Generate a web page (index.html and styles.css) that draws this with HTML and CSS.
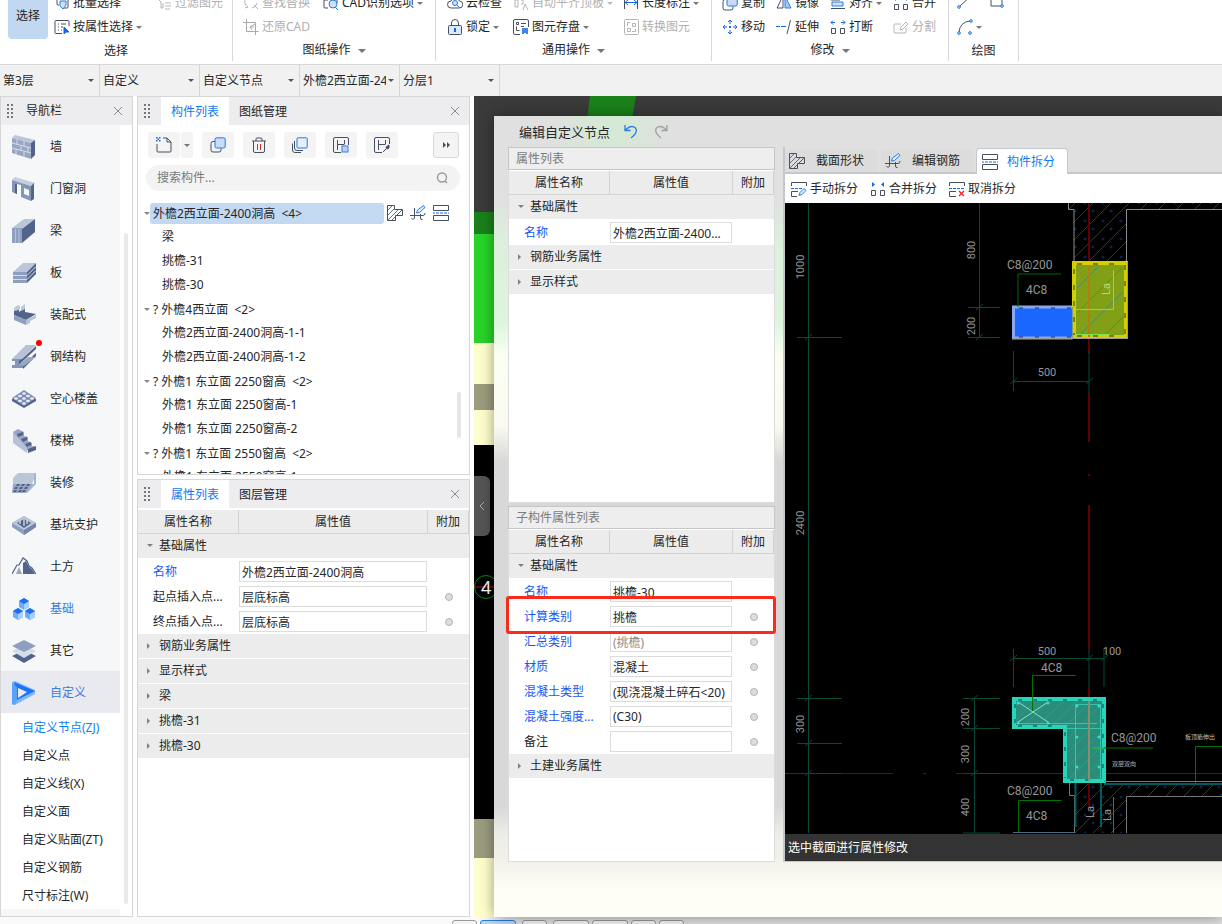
FILE: index.html
```html
<!DOCTYPE html>
<html lang="zh-CN">
<head>
<meta charset="utf-8">
<title>编辑自定义节点</title>
<link rel="stylesheet" href="styles.css">
</head>
<body>
<svg class="sprite" aria-hidden="true">
  <symbol id="i-batch" viewBox="0 0 16 16"><path d="M3 1v8q0 1 1 1h1M8 13h5q1 0 1-1V4" stroke="#474f63"/><path d="M6 6h6v4l-3 4-3-3z" fill="#cfe0f7" stroke="#2a7de1"/></symbol>
  <symbol id="i-prop" viewBox="0 0 16 16"><path d="M15 7V2.500q0-1-1-1H2q-1 0-1 1v11q0 1 1 1h6M4 5h1m2 0h5M4 8h1m2 0h2M4 11h1m2 0h1" stroke="#474f63"/><path d="M10 8v7l2-2h3z" fill="#1467e8" stroke="#1467e8"/></symbol>
  <symbol id="i-filter" viewBox="0 0 16 16"><path d="M1 3l4 4v6h2V8M9 8h6M9 11h6M9 14h5" stroke="#b5b5b5"/></symbol>
  <symbol id="i-find" viewBox="0 0 16 16"><path d="M4 2a6 6 0 0 0 1 10l-3 1M9 13a6 6 0 0 0 5-5M11 10l4 4" stroke="#b5b5b5"/></symbol>
  <symbol id="i-crop" viewBox="0 0 16 16"><path d="M3.500 0v12.500h12M0 3.500h12.500V16M12 5L7 8l2 3M7 8h4" stroke="#a9a9a9"/></symbol>
  <symbol id="i-cad" viewBox="0 0 16 16"><path d="M5 13H2q-1 0-1-1V2h11q2 0 2 2v4M1 5h4" stroke="#474f63"/><circle cx="10" cy="9" r="4" fill="#cfe0f7" stroke="#2a7de1"/><path d="M12 12l3 3" stroke="#2a7de1"/></symbol>
  <symbol id="i-cloud" viewBox="0 0 16 16"><path d="M4 13a3.500 3.500 0 0 1 0-7 4.500 4.500 0 0 1 8.500 0A3.500 3.500 0 0 1 12 13z" stroke="#474f63"/><circle cx="8" cy="8" r="2.500" stroke="#2a7de1" fill="#cfe0f7"/><path d="M10 10l3 3" stroke="#2a7de1"/></symbol>
  <symbol id="i-lock" viewBox="0 0 16 16"><path d="M4.500 6V4a3.500 3.500 0 0 1 7 0v2" stroke="#474f63"/><rect x="1.500" y="6.500" width="13" height="9" rx="1" fill="#dbe9fb" stroke="#474f63"/><path d="M8 9v4" stroke="#1467e8" stroke-width="2"/></symbol>
  <symbol id="i-flush" viewBox="0 0 16 16"><path d="M1 2h14M2 5h3v7H2zM8 5h2v4H8M10 15l2-6 3 6" stroke="#b5b5b5"/></symbol>
  <symbol id="i-save" viewBox="0 0 16 16"><path d="M15.500 8V2q0-1.500-1.500-1.500H2Q.5.5.5 2v12q0 1.500 1.500 1.500h5M8 4.500h5M8 7.500h3M3.500 3.500h2v2h-2zM3.500 7.500v4h3" stroke="#474f63"/><path d="M9 9h6v6H9z" fill="#3f84ea"/><path d="M11 14.500h2" stroke="#fff"/></symbol>
  <symbol id="i-length" viewBox="0 0 16 16"><path d="M1.500 1v13M14.500 1v13" stroke="#474f63"/><path d="M2 7.500h12M5 5L2 7.500 5 10M11 5l3 2.500-3 2.500" stroke="#1467e8"/></symbol>
  <symbol id="i-convert" viewBox="0 0 16 16"><rect x="1.500" y=".5" width="14" height="15" rx="1" stroke="#b5b5b5"/><path d="M4.500 7V3.500H7M9.500 4.500h3v3h-3zM4.500 9.500h3v3h-3zM9 12.500h3.500V10" stroke="#b5b5b5"/></symbol>
  <symbol id="i-copy" viewBox="0 0 16 16"><path d="M5 4.500H3q-2 0-2 2V13q0 2 2 2h6q2 0 2-2v-1.500" stroke="#474f63"/><rect x="5" y=".8" width="10.200" height="10.200" rx="1.500" fill="#cadcf5" stroke="#1f78e5"/></symbol>
  <symbol id="i-move" viewBox="0 0 16 16"><path d="M8 1v4M8 11v4M1 8h4M11 8h4M6 3l2-2 2 2M6 13l2 2 2-2M3 6L1 8l2 2M13 6l2 2-2 2" stroke="#1467e8"/><rect x="7" y="7" width="2" height="2" fill="#1467e8"/></symbol>
  <symbol id="i-mirror" viewBox="0 0 16 16"><path d="M7 1v12H1z" stroke="#474f63"/><path d="M9 1v12h6z" fill="#a6c6f3" stroke="#2a7de1"/></symbol>
  <symbol id="i-extend" viewBox="0 0 16 16"><path d="M14.500 1l-3.500 14" stroke="#474f63"/><path d="M0 7.500h4m1 0h5" stroke="#1467e8"/></symbol>
  <symbol id="i-align" viewBox="0 0 16 16"><path d="M1 1h9v4H1zM1 13.500h14" stroke="#474f63"/><path d="M2 7h11v4H2z" stroke="#2a7de1" fill="#cfe0f7"/></symbol>
  <symbol id="i-break" viewBox="0 0 16 16"><path d="M1.500 9.500h4v5h-4zM10.500 9.500h4v5h-4z" stroke="#474f63"/><path d="M1 3.500h4M3 1.500l-2 2 2 2M11 3.500h4M13 1.500l2 2-2 2" stroke="#1467e8"/></symbol>
  <symbol id="i-merge" viewBox="0 0 16 16"><path d="M1.500 9.500h4v5h-4zM10.500 9.500h4v5h-4z" stroke="#474f63"/><path d="M2 1l3 2.500L2 6zM14 1l-3 2.500L14 6z" fill="#1467e8"/></symbol>
  <symbol id="i-divide" viewBox="0 0 16 16"><path d="M8 5H2q-1 0-1 1v7q0 1 1 1h10q1 0 1-1V9M7 11l1-3 5-5 2 2-5 5z" stroke="#b5b5b5"/></symbol>
  <symbol id="i-line" viewBox="0 0 16 16"><path d="M3 11L15 0" stroke="#474f63"/><circle cx="2" cy="12" r="1.300" stroke="#1467e8"/></symbol>
  <symbol id="i-rect" viewBox="0 0 16 16"><path d="M2 0v11h11V0" stroke="#474f63"/><circle cx="13" cy="11" r="1.300" stroke="#1467e8" fill="#fff"/></symbol>
  <symbol id="i-arc" viewBox="0 0 16 16"><path d="M2 13Q3 3 13 2" stroke="#474f63"/><g stroke="#1467e8" fill="#fff"><circle cx="2" cy="14" r="1.300"/><circle cx="14" cy="2" r="1.300"/><circle cx="13" cy="14" r="1.300"/></g></symbol>
  <symbol id="i-new" viewBox="0 0 16 16"><path d="M7 1h4l4 4v9q0 1-1 1H2q-1 0-1-1V7M11 1v4h4" stroke="#474f63"/><path d="M0 0h1.500v1.500H0zM3 0h1.500v1.500H3zM1.500 1.500H3V3H1.500zM0 3h1.500v1.500H0zM3 3h1.500v1.500H3z" fill="#1467e8"/></symbol>
  <symbol id="i-trash" viewBox="0 0 16 16"><path d="M1 4h14M5 4V2q0-1 1-1h4q1 0 1 1v2M2.500 4v10q0 1.500 1.500 1.500h8q1.500 0 1.500-1.500V4" stroke="#474f63"/><path d="M6.500 7v6M9.500 7v6" stroke="#e02828"/></symbol>
  <symbol id="i-layers" viewBox="0 0 16 16"><path d="M.5 6.500V13q0 2.500 2.500 2.500h6M2.500 4v7q0 2.500 2.500 2.500h6" stroke="#474f63"/><rect x="5" y=".8" width="10.200" height="10.200" rx="1" fill="#e6f0fc" stroke="#1f78e5"/></symbol>
  <symbol id="i-store" viewBox="0 0 16 16"><path d="M15.500 8V2q0-1.500-1.500-1.500H2Q.5.5.5 2v12q0 1.500 1.500 1.500h6M4.500 3v10M4.500 7.500h7M11.500 3v4" stroke="#474f63"/><rect x="9" y="9" width="6" height="6" fill="#b9d2f4" stroke="#3f7fdc"/></symbol>
  <symbol id="i-pick" viewBox="0 0 16 16"><path d="M15.500 7V2q0-1.500-1.500-1.500H2Q.5.5.5 2v12q0 1.500 1.500 1.500h6M4.500 3v10M4.500 7.500h7M11.500 3v4M9 15l4-4" stroke="#474f63"/><path d="M12 10l3-2 0 3-2 1z" fill="#474f63" stroke="#474f63"/></symbol>
  <symbol id="i-search" viewBox="0 0 16 16"><circle cx="7" cy="7.500" r="4.500" stroke="#999" stroke-width="1.400"/><path d="M10 11l2 2" stroke="#999" stroke-width="1.400"/></symbol>
  <symbol id="i-section" viewBox="0 0 16 16"><path d="M.5.5h7v4h8v6h-7v5h-8z" stroke="#474f63"/><path d="M1 5l4-4M1 10l6-6M1 15L11 5M5 15l10-10M10 10l4-4" stroke="#474f63" stroke-width=".8"/></symbol>
  <symbol id="i-rebar" viewBox="0 0 16 16"><path d="M4.500 3v9q0 3.500-3 1.500M0 10.500h13q2 0 2-2.500M10.500 9v4q0 2 2 1.500" stroke="#474f63"/><path d="M6.500 8l1-3 6-4.500 1.500 2-5.500 5z" fill="#dceafb" stroke="#2a7de1"/></symbol>
  <symbol id="i-split" viewBox="0 0 16 16"><path d="M.5.5h15v5H.5zM.5 10.500h15v5H.5z" stroke="#474f63"/><path d="M0 8h2m1 0h3m1 0h3m1 0h3m1 0h1" stroke="#1467e8"/></symbol>
  <symbol id="i-msplit" viewBox="0 0 16 16"><path d="M.5 5V1.500h15V5M7 10.500H.5v5H6" stroke="#474f63"/><path d="M0 7.500h3m1 0h3m1 0h3" stroke="#1467e8"/><path d="M8 14.500l1-3 4-4 2 2-4 4z" fill="#dceafb" stroke="#2a7de1"/></symbol>
  <symbol id="i-csplit" viewBox="0 0 16 16"><path d="M.5 5V1.500h15V5M7 10.500H.5v5H7" stroke="#474f63"/><path d="M0 7.500h3m1 0h3m1 0h3m1 0h3" stroke="#1467e8"/><path d="M10 10l5 5M15 10l-5 5" stroke="#e02828" stroke-width="1.300"/></symbol>
  <symbol id="i-undo" viewBox="0 0 16 16"><path d="M2 1v5.500h5.500M2 6.500Q8 0 12.500 4q3 4-4.500 10" stroke="currentColor" stroke-width="1.300"/></symbol>
  <symbol id="i-redo" viewBox="0 0 16 16"><path d="M14 1v5.500H8.500M14 6.500Q8 0 3.500 4q-3 4 4.500 10" stroke="currentColor" stroke-width="1.300"/></symbol>
  <symbol id="i-close" viewBox="0 0 10 10"><path d="M1 1l8 8M9 1L1 9" stroke="#8c8c8c"/></symbol>
  <symbol id="i-grip" viewBox="0 0 8 16"><path d="M1 1h2v2H1zM5 1h2v2H5zM1 5h2v2H1zM5 5h2v2H5zM1 9h2v2H1zM5 9h2v2H5zM1 13h2v2H1zM5 13h2v2H5z" fill="#777"/></symbol>

  <symbol id="n-wall" viewBox="0 0 24 24"><path d="M0 3L3 0l20 5-4 3z" fill="#bcc6d9"/><path d="M0 3l19 5v16L0 18z" fill="#98a5c3"/><path d="M19 8l4-3v15l-4 4z" fill="#52648a"/><path d="M0 8l19 5M0 13l19 5M5 4.500v5M12 6v5M9 10.500v5M16 12v5M4 14v5M12 16.500v5" stroke="#d5dcea"/></symbol>
  <symbol id="n-door" viewBox="0 0 24 24"><path d="M0 3l3-3 20 6-4 3z" fill="#c6cede"/><path d="M0 3l19 6v15L9 20V8L5 7v10l-5-2zM12 11v6l5 2v-6z" fill="#8595b8" fill-rule="evenodd"/><path d="M19 9l3-3v16l-3 2zM3 7l2 0v10l-2-1z" fill="#52648a"/></symbol>
  <symbol id="n-beam" viewBox="0 0 24 24"><path d="M0 9L12 0h11L10 10z" fill="#bcc6d9"/><path d="M0 9h10v15H0z" fill="#8f9fc0"/><path d="M10 10L23 0v13L10 24z" fill="#52648a"/><path d="M3.500 10v14M7 10v14" stroke="#b6c1d8"/></symbol>
  <symbol id="n-slab" viewBox="0 0 24 24"><path d="M1 11l10-9h13l-9 9z" fill="#bcc6d9"/><path d="M1 11h14v11H1z" fill="#8f9fc0"/><path d="M15 11l9-9v11l-9 9z" fill="#52648a"/><path d="M1 14.500h14l9-9M1 18.500h14l9-9" stroke="#d5dcea"/></symbol>
  <symbol id="n-prefab" viewBox="0 0 24 24"><path d="M2 8l5-3v4l6-5v5l11 2-10 6L2 12z" fill="#52648a"/><path d="M2 12l12 5v5L2 17z" fill="#8f9fc0"/><path d="M14 17l10-5v3l-6 3v2l-4 2z" fill="#b6c1d8"/><path d="M2 5l4-3 2 1v3L4 8 2 7zM9 4l4-3v5L9 8z" fill="#bcc6d9"/></symbol>
  <symbol id="n-steel" viewBox="0 0 24 24"><path d="M0 14L14 0h10L10 14z" fill="#b6c1d8"/><path d="M0 14h10v2H7v4h4v3H0v-3h3v-4H0z" fill="#8595b8"/><path d="M10 14L24 1v3L12 15 7 20v-4z" fill="#52648a"/><path d="M11 20L24 8v3L11 24z" fill="#52648a"/><path d="M7 20l9-8h8l-12 9z" fill="#9aa8c5"/></symbol>
  <symbol id="n-hollow" viewBox="0 0 24 24"><path d="M12 4l12 8v2l-12 7L0 14v-2z" fill="#52648a"/><path d="M12 3l12 8-12 8L0 11z" fill="#7f90b4"/><g fill="#e6ebf4"><ellipse cx="12" cy="6.500" rx="2" ry="1.300"/><ellipse cx="8" cy="9" rx="2" ry="1.300"/><ellipse cx="4" cy="11.500" rx="2" ry="1.300"/><ellipse cx="16" cy="9" rx="2" ry="1.300"/><ellipse cx="12" cy="11.500" rx="2" ry="1.300"/><ellipse cx="8" cy="14" rx="2" ry="1.300"/><ellipse cx="20" cy="11.500" rx="2" ry="1.300"/><ellipse cx="16" cy="14" rx="2" ry="1.300"/><ellipse cx="12" cy="16.500" rx="2" ry="1.300"/></g></symbol>
  <symbol id="n-stair" viewBox="0 0 24 24"><path d="M1 3l5-3 6 3v4l4 1v4l4 2v3l4 1-8 4-4-5-4-4-4-4z" fill="#98a5c3"/><path d="M1 3l14 16v5L1 14z" fill="#b6c1d8"/><path d="M5 5l6-2v3l-5 2zM9 10l6-2v3l-4 2zM13 15l6-2v3l-4 2zM16 20l8-3v4l-8 3z" fill="#52648a"/></symbol>
  <symbol id="n-finish" viewBox="0 0 24 24"><path d="M1 7l5-5h18l-4 11H1z" fill="#bcc6d9"/><path d="M1 13h21l-8 9H0z" fill="#9aa8c5"/><path d="M22 13V3l2-1v11l-9 9h-2z" fill="#a8b4cc"/><path d="M5 13h3l-1 2H4zm5 0h3l-1 2H9zm5 0h3l-1 2h-3zM3 16h3l-1 2H2zm5 0h3l-1 2H7zm5 0h3l-1 2h-3zM2 19h3l-1 2H1zm5 0h3l-1 2H6zm4 0h3l-1 2h-3z" fill="#52648a"/></symbol>
  <symbol id="n-pit" viewBox="0 0 24 24"><path d="M12 3l12 7v4l-12 8L0 14v-4z" fill="#8f9fc0"/><path d="M12 3l12 7-12 7L0 10z" fill="#bcc6d9"/><path d="M12 6l7 4-7 5-7-5z" fill="#52648a"/><path d="M8 7v4M12 6v7M15 7v4" stroke="#c8d0e0" stroke-width="1.500"/><path d="M12 17l12-7v4l-12 8z" fill="#7384aa"/></symbol>
  <symbol id="n-earth" viewBox="0 0 24 24"><path d="M0 19l5-9 2 0 4-7 4 3 2 5 3 2 4 6" stroke="#52648a" stroke-width="1.200"/><path d="M11 19V8l3-2 3 6 3 2 3 5z" fill="#52648a"/><path d="M4 19l3-7 3 7z" fill="#98a5c3"/></symbol>
  <symbol id="n-base" viewBox="0 0 24 24"><path d="M12 1l5 3v6l-5 3-5-3V4zM6 11l5 3v6l-5 3-5-3v-6zM18 11l5 3v6l-5 3-5-3v-6z" fill="#6cabff"/><path d="M12 7l5-3v6l-5 3zM6 17l5-3v6l-5 3zM18 17l5-3v6l-5 3z" fill="#a9ceff"/><path d="M12 1l5 3-5 3-5-3zM6 11l5 3-5 3-5-3zM18 11l5 3-5 3-5-3z" fill="#1d6ff2"/></symbol>
  <symbol id="n-other" viewBox="0 0 24 24"><path d="M12 11l12 6-12 7-12-7z" fill="#52648a"/><path d="M12 6l12 6-12 7-12-7z" fill="#d5dcea"/><path d="M12 1l12 6-12 6L0 7z" fill="#8f9fc0"/></symbol>
  <symbol id="n-custom" viewBox="0 0 24 24"><path d="M0 1l3-1 20 9v4L3 24l-3-1z" fill="#7db8ff"/><path d="M2 1l21 9L5 19z" fill="#1d74f0"/><path d="M0 2l5 4v14l-3 4-2-1z" fill="#5aa2fa"/><path d="M6 7l9 4-9 6z" fill="#ebecf0"/></symbol>
</svg>

<header class="ribbon">
  <section class="group g-select">
    <div class="tools">
      <button class="big">选择</button>
      <div class="col">
        <button class="tool"><svg><use href="#i-batch"/></svg>批量选择</button>
        <button class="tool"><svg><use href="#i-prop"/></svg>按属性选择<i class="caret"></i></button>
      </div>
      <div class="col"><button class="tool" disabled><svg><use href="#i-filter"/></svg>过滤图元</button></div>
    </div>
    <h2>选择</h2>
  </section>
  <section class="group g-sheet">
    <div class="tools">
      <div class="col">
        <button class="tool" disabled><svg><use href="#i-find"/></svg>查找替换</button>
        <button class="tool" disabled><svg><use href="#i-crop"/></svg>还原CAD</button>
      </div>
      <div class="col"><button class="tool"><svg><use href="#i-cad"/></svg>CAD识别选项<i class="caret"></i></button></div>
    </div>
    <h2>图纸操作<i class="caret large"></i></h2>
  </section>
  <section class="group g-common">
    <div class="tools">
      <div class="col">
        <button class="tool"><svg><use href="#i-cloud"/></svg>云检查</button>
        <button class="tool"><svg><use href="#i-lock"/></svg>锁定<i class="caret"></i></button>
      </div>
      <div class="col">
        <button class="tool" disabled><svg><use href="#i-flush"/></svg>自动平齐顶板<i class="caret"></i></button>
        <button class="tool"><svg><use href="#i-save"/></svg>图元存盘<i class="caret"></i></button>
      </div>
      <div class="col">
        <button class="tool"><svg><use href="#i-length"/></svg>长度标注<i class="caret"></i></button>
        <button class="tool" disabled><svg><use href="#i-convert"/></svg>转换图元</button>
      </div>
    </div>
    <h2>通用操作<i class="caret large"></i></h2>
  </section>
  <section class="group g-modify">
    <div class="tools">
      <div class="col">
        <button class="tool"><svg><use href="#i-copy"/></svg>复制</button>
        <button class="tool"><svg><use href="#i-move"/></svg>移动</button>
      </div>
      <div class="col">
        <button class="tool"><svg><use href="#i-mirror"/></svg>镜像</button>
        <button class="tool"><svg><use href="#i-extend"/></svg>延伸</button>
      </div>
      <div class="col">
        <button class="tool"><svg><use href="#i-align"/></svg>对齐<i class="caret"></i></button>
        <button class="tool"><svg><use href="#i-break"/></svg>打断</button>
      </div>
      <div class="col">
        <button class="tool"><svg><use href="#i-merge"/></svg>合并</button>
        <button class="tool" disabled><svg><use href="#i-divide"/></svg>分割</button>
      </div>
    </div>
    <h2>修改<i class="caret large"></i></h2>
  </section>
  <section class="group g-draw">
    <div class="tools">
      <div class="col">
        <button class="tool" aria-label="直线"><svg><use href="#i-line"/></svg></button>
        <button class="tool" aria-label="弧线"><svg><use href="#i-arc"/></svg><i class="caret"></i></button>
      </div>
      <div class="col"><button class="tool" aria-label="矩形"><svg><use href="#i-rect"/></svg></button></div>
    </div>
    <h2>绘图</h2>
  </section>
</header>

<div class="filters">
  <label><select aria-label="楼层"><option>第3层</option></select></label>
  <label><select aria-label="类别"><option>自定义</option></select></label>
  <label><select aria-label="类型"><option>自定义节点</option></select></label>
  <label><select aria-label="构件"><option>外檐2西立面-2400洞高</option></select></label>
  <label><select aria-label="分层"><option>分层1</option></select></label>
</div>

<main class="workspace">
  <nav class="panel nav">
    <div class="panel-head"><svg class="grip"><use href="#i-grip"/></svg><h3>导航栏</h3><button class="close" aria-label="关闭"><svg><use href="#i-close"/></svg></button></div>
    <div class="nav-body">
      <div class="nav-list">
        <button class="nav-item"><svg><use href="#n-wall"/></svg>墙</button>
        <button class="nav-item"><svg><use href="#n-door"/></svg>门窗洞</button>
        <button class="nav-item"><svg><use href="#n-beam"/></svg>梁</button>
        <button class="nav-item"><svg><use href="#n-slab"/></svg>板</button>
        <button class="nav-item"><svg><use href="#n-prefab"/></svg>装配式</button>
        <button class="nav-item badge"><svg><use href="#n-steel"/></svg>钢结构</button>
        <button class="nav-item"><svg><use href="#n-hollow"/></svg>空心楼盖</button>
        <button class="nav-item"><svg><use href="#n-stair"/></svg>楼梯</button>
        <button class="nav-item"><svg><use href="#n-finish"/></svg>装修</button>
        <button class="nav-item"><svg><use href="#n-pit"/></svg>基坑支护</button>
        <button class="nav-item"><svg><use href="#n-earth"/></svg>土方</button>
        <button class="nav-item blue"><svg><use href="#n-base"/></svg>基础</button>
        <button class="nav-item"><svg><use href="#n-other"/></svg>其它</button>
        <button class="nav-item blue current"><svg><use href="#n-custom"/></svg>自定义</button>
        <div class="sub-list">
          <button class="active">自定义节点(ZJ)</button>
          <button>自定义点</button>
          <button>自定义线(X)</button>
          <button>自定义面</button>
          <button>自定义贴面(ZT)</button>
          <button>自定义钢筋</button>
          <button>尺寸标注(W)</button>
        </div>
      </div>
      <div class="nav-scroll"></div>
    </div>
  </nav>

  <div class="side">
    <section class="panel components">
      <div class="panel-head"><svg class="grip"><use href="#i-grip"/></svg><button class="tab on">构件列表</button><button class="tab">图纸管理</button><button class="close" aria-label="关闭"><svg><use href="#i-close"/></svg></button></div>
      <div class="actions">
        <div class="pair"><button aria-label="新建"><svg><use href="#i-new"/></svg></button><button class="drop" aria-label="更多新建"><i class="caret"></i></button></div>
        <button aria-label="复制"><svg><use href="#i-copy"/></svg></button>
        <button aria-label="删除"><svg><use href="#i-trash"/></svg></button>
        <button aria-label="层间复制"><svg><use href="#i-layers"/></svg></button>
        <button aria-label="存档"><svg><use href="#i-store"/></svg></button>
        <button aria-label="提取"><svg><use href="#i-pick"/></svg></button>
        <button class="more" aria-label="更多"><i></i><i></i></button>
      </div>
      <label class="search"><input type="text" placeholder="搜索构件..." aria-label="搜索构件"><svg><use href="#i-search"/></svg></label>
      <div class="tree-wrap">
        <ul class="tree">
          <li class="parent"><i class="caret"></i><span class="selected">外檐2西立面-2400洞高 &nbsp;&lt;4&gt;</span><svg><use href="#i-section"/></svg><svg><use href="#i-rebar"/></svg><svg><use href="#i-split"/></svg></li>
          <li>梁</li>
          <li>挑檐-31</li>
          <li>挑檐-30</li>
          <li class="parent"><i class="caret"></i><span>? 外檐4西立面 &nbsp;&lt;2&gt;</span></li>
          <li>外檐2西立面-2400洞高-1-1</li>
          <li>外檐2西立面-2400洞高-1-2</li>
          <li class="parent"><i class="caret"></i><span>? 外檐1 东立面 2250窗高 &nbsp;&lt;2&gt;</span></li>
          <li>外檐1 东立面 2250窗高-1</li>
          <li>外檐1 东立面 2250窗高-2</li>
          <li class="parent"><i class="caret"></i><span>? 外檐1 东立面 2550窗高 &nbsp;&lt;2&gt;</span></li>
          <li>外檐1 东立面 2550窗高-1</li>
        </ul>
        <div class="tree-scroll"></div>
      </div>
    </section>

    <section class="panel props">
      <div class="panel-head"><svg class="grip"><use href="#i-grip"/></svg><button class="tab on">属性列表</button><button class="tab">图层管理</button><button class="close" aria-label="关闭"><svg><use href="#i-close"/></svg></button></div>
      <table class="grid">
        <colgroup><col class="c-name"><col><col class="c-add"></colgroup>
        <thead><tr><th>属性名称</th><th>属性值</th><th>附加</th></tr></thead>
        <tbody>
          <tr class="section open"><td colspan="3">基础属性</td></tr>
          <tr><td class="key"><label for="p1">名称</label></td><td><input id="p1" type="text" value="外檐2西立面-2400洞高"></td><td></td></tr>
          <tr><td><label for="p2">起点插入点...</label></td><td><input id="p2" type="text" value="层底标高"></td><td><input type="radio" aria-label="附加起点插入点"></td></tr>
          <tr><td><label for="p3">终点插入点...</label></td><td><input id="p3" type="text" value="层底标高"></td><td><input type="radio" aria-label="附加终点插入点"></td></tr>
          <tr class="section"><td colspan="3">钢筋业务属性</td></tr>
          <tr class="section"><td colspan="3">显示样式</td></tr>
          <tr class="section"><td colspan="3">梁</td></tr>
          <tr class="section"><td colspan="3">挑檐-31</td></tr>
          <tr class="section"><td colspan="3">挑檐-30</td></tr>
        </tbody>
      </table>
    </section>
  </div>

  <section class="stage">
    <svg class="model" aria-hidden="true">
      <path d="M116 0h46l-7 40h-44z" fill="#1a821a"/>
      <path d="M4 127h16" stroke="#2c6a2c" stroke-dasharray="4 4"/>
      <circle cx="12" cy="491" r="11.500" stroke="#0a8a12"/><path d="M0 491h20" stroke="#b01010"/>
      <text x="7" y="498" class="axis">4</text>
    </svg>
    <button class="handle" aria-label="收起"><svg viewBox="0 0 8 12"><path d="M6 2L2 6l4 4" stroke="#aaa"/></svg></button>

    <div class="dialog" role="dialog" aria-label="编辑自定义节点">
      <div class="title"><h1>编辑自定义节点</h1><button class="undo" aria-label="撤销"><svg><use href="#i-undo"/></svg></button><button class="redo" aria-label="恢复"><svg><use href="#i-redo"/></svg></button></div>
      <div class="dialog-body">
        <div class="lists">
          <section class="box">
            <h4>属性列表</h4>
            <table class="grid">
              <colgroup><col class="c-name"><col><col class="c-add"></colgroup>
              <thead><tr><th>属性名称</th><th>属性值</th><th>附加</th></tr></thead>
              <tbody>
                <tr class="section open"><td colspan="3">基础属性</td></tr>
                <tr><td class="key"><label for="d1">名称</label></td><td><input id="d1" type="text" value="外檐2西立面-2400..."></td><td></td></tr>
                <tr class="section"><td colspan="3">钢筋业务属性</td></tr>
                <tr class="section"><td colspan="3">显示样式</td></tr>
              </tbody>
            </table>
          </section>
          <section class="box">
            <h4>子构件属性列表</h4>
            <table class="grid">
              <colgroup><col class="c-name"><col><col class="c-add"></colgroup>
              <thead><tr><th>属性名称</th><th>属性值</th><th>附加</th></tr></thead>
              <tbody>
                <tr class="section open"><td colspan="3">基础属性</td></tr>
                <tr><td class="key"><label for="s1">名称</label></td><td><input id="s1" type="text" value="挑檐-30"></td><td></td></tr>
                <tr><td class="key"><label for="s2">计算类别</label></td><td><input id="s2" type="text" value="挑檐"></td><td><input type="radio" aria-label="附加计算类别"></td></tr>
                <tr><td class="key"><label for="s3">汇总类别</label></td><td><input id="s3" class="muted" type="text" value="(挑檐)"></td><td><input type="radio" aria-label="附加汇总类别"></td></tr>
                <tr><td class="key"><label for="s4">材质</label></td><td><input id="s4" type="text" value="混凝土"></td><td><input type="radio" aria-label="附加材质"></td></tr>
                <tr><td class="key"><label for="s5">混凝土类型</label></td><td><input id="s5" type="text" value="(现浇混凝土碎石&lt;20)"></td><td><input type="radio" aria-label="附加混凝土类型"></td></tr>
                <tr><td class="key"><label for="s6">混凝土强度...</label></td><td><input id="s6" type="text" value="(C30)"></td><td><input type="radio" aria-label="附加混凝土强度"></td></tr>
                <tr><td><label for="s7">备注</label></td><td><input id="s7" type="text" value=""></td><td><input type="radio" aria-label="附加备注"></td></tr>
                <tr class="section"><td colspan="3">土建业务属性</td></tr>
              </tbody>
            </table>
            <div class="highlight"></div>
          </section>
        </div>

        <div class="editor">
          <div class="tabs">
            <button><svg><use href="#i-section"/></svg>截面形状</button>
            <button><svg><use href="#i-rebar"/></svg>编辑钢筋</button>
            <button class="on"><svg><use href="#i-split"/></svg>构件拆分</button>
          </div>
          <div class="bar">
            <button class="tool"><svg><use href="#i-msplit"/></svg>手动拆分</button>
            <button class="tool"><svg><use href="#i-merge"/></svg>合并拆分</button>
            <button class="tool"><svg><use href="#i-csplit"/></svg>取消拆分</button>
          </div>
          <svg class="cad" role="img" aria-label="节点截面">
            <defs>
              <pattern id="hatch" width="18" height="18" patternUnits="userSpaceOnUse"><path d="M-2 20L20 -2M-2 2L2 -2M16 20L20 16" stroke="#0c3f80"/><circle cx="5" cy="5" r="1" stroke="#0b3060"/><circle cx="13" cy="13" r="1" stroke="#0b3060"/></pattern>
              <pattern id="hatch2" width="14" height="14" patternUnits="userSpaceOnUse"><path d="M-2 16L16 -2M-2 2L2 -2M12 16L16 12" stroke="#3a9fb0" opacity=".5"/></pattern>
            </defs>
            <g transform="translate(-785 -203)">
              <path d="M1069 203h153v7h-96v52h-52v-52h-5z" fill="url(#hatch)"/>
              <path d="M1068.500 203v6.500h5.500v52M1222 209.500h-95.500v52" stroke="#8c8c8c"/>
              <path d="M1089 203v150M1089 393v49M1089 474v2M1089 505v144M1089 687v33" stroke="#600000" stroke-width="2"/>
              <g stroke="#07483a">
                <path d="M808.500 203v630M797 337.500h45M797 698.500h45M797 743.500h45M797 773.500h45"/>
                <path d="M979.500 203v134M968 307.500h32M968 337.500h32M974.500 698v135M963 698.500h37M963 728.500h37M963 773.500h37M963 833h37"/>
                <path d="M1013.500 351v40M1089 351v42M1013 381.500h76M1013.500 649v38M1089 649v38M1104 649v38M1013 658.500h91"/>
                <path d="M805 340l7-6M805 701l7-6M805 746l7-6M805 776l7-6M976 310l7-6M976 340l7-6M971 701l7-6M971 731l7-6M971 776l7-6M1010 384l7-6M1086 384l7-6M1010 661l7-6M1086 661l7-6M1101 661l7-6"/>
              </g>
              <path d="M785 773.500h12" stroke="#0a3c4a"/>
              <path d="M842 773.500h51M923 773.500h3M956 773.500h7M1000 773.500h222" stroke="#850000"/>

              <rect x="1074" y="263" width="52" height="74" fill="#829f18" stroke="#d2d000" stroke-width="4"/>
              <path d="M1077 288l22-22M1077 313l45-45M1080 335l43-43M1105 335l18-18" stroke="#4f8a52"/>
              <path d="M1089 265v72" stroke="#b08010" stroke-width="2"/>
              <path d="M1074 269v66M1125 265v70M1077 264h48M1077 336h48" stroke="#24301c" stroke-dasharray="5 11"/>
              <path d="M1076 309.500h37.500V270M1076 334.500h34" stroke="#7fe04a"/>
              <rect x="1013.500" y="307" width="59" height="31" fill="#1a67ff"/>
              <path d="M1072 307h-58.500v31h59" stroke="#8aa8ee" stroke-width="3"/>
              <path d="M1019 308h52M1019 337h52" stroke="#17306e" stroke-dasharray="4 12"/>
              <path d="M1018 307v-33h43" stroke="#006600"/>
              <path d="M1127.500 262v76.500h-115" stroke="#9a9a9a"/>

              <path d="M1014 699h90v82h-39v-54h-51z" fill="#2a8c7b" stroke="#25d6b8" stroke-width="4"/>
              <path d="M1016 701h86v78h-35v-54h-51z" fill="url(#hatch2)"/>
              <path d="M1018 700h84M1018 726h44M1103 704v74M1065 732v46M1015 704v20M1070 780h30" stroke="#0e3a52" stroke-dasharray="4 11"/>
              <path d="M1018 702l30 20M1048 702l-30 20" stroke="#8fe0d0"/>
              <path d="M1075.500 782v-77.500h25V782M1018 723.500h79M1066 728.500h36" stroke="#37c3ae"/>
              <path d="M1089 701v80" stroke="#8a8f70" stroke-width="2"/>
              <g fill="#34e0c4"><circle cx="1077" cy="706" r="1.500"/><circle cx="1099" cy="706" r="1.500"/><circle cx="1077" cy="737" r="1.500"/><circle cx="1099" cy="737" r="1.500"/><circle cx="1077" cy="767" r="1.500"/><circle cx="1099" cy="767" r="1.500"/><circle cx="1018" cy="703" r="1.500"/><circle cx="1048" cy="703" r="1.500"/><circle cx="1018" cy="723" r="1.500"/><circle cx="1048" cy="723" r="1.500"/></g>
              <path d="M1032.500 711v-35.500h43M1092 748h61M1195.500 783v-36.500h27M1018.500 833v-32.500h43" stroke="#007300"/>
              <path d="M1092 748h12" stroke="#35e070"/>

              <path d="M1070 783h152v13h-96v37h-52v-37h-4z" fill="url(#hatch)"/>
              <path d="M1104 781.500h118M1222 796.500h-95.500V833M1069.500 783v12.500h5V833" stroke="#777"/>
              <path d="M1104 784h118M1075.500 783v44M1101 783v44" stroke="#005c5c" stroke-width="2"/>
              <path d="M1089 783v24" stroke="#600000" stroke-width="2"/>
              <path d="M1113.500 797v36" stroke="#008b8b"/>
              <path d="M1013 832.500h61" stroke="#456a86"/>

              <g class="note">
                <text x="1007" y="269">C8@200</text><text x="1026" y="294">4C8</text>
                <text x="1041" y="672">4C8</text><text x="1111" y="742">C8@200</text>
                <text x="1007" y="795">C8@200</text><text x="1026" y="820">4C8</text>
              </g>
              <g class="dim">
                <text x="1047" y="376">500</text><text x="1047" y="655">500</text><text x="1112" y="655">100</text>
                <text transform="translate(804 267) rotate(-90)">1000</text>
                <text transform="translate(804 523) rotate(-90)">2400</text>
                <text transform="translate(804 724) rotate(-90)">300</text>
                <text transform="translate(975 250) rotate(-90)">800</text>
                <text transform="translate(975 326) rotate(-90)">200</text>
                <text transform="translate(969 717) rotate(-90)">200</text>
                <text transform="translate(969 754) rotate(-90)">300</text>
                <text transform="translate(969 807) rotate(-90)">400</text>
                <text class="lime" transform="translate(1110 289) rotate(-90)">La</text>
                <text transform="translate(1094 812) rotate(-90)">La</text>
                <text transform="translate(1111 815) rotate(-90)">La</text>
              </g>
              <text class="tiny" x="1112" y="766">双层双向</text>
              <text class="tiny" x="1185" y="739">板顶筋伸出</text>
            </g>
          </svg>
          <div class="status">选中截面进行属性修改</div>
        </div>
      </div>
    </div>
  </section>
</main>

<footer class="foot">
  <button aria-label="视图"></button><button class="wide on" aria-label="动态输入"></button><button class="mid" aria-label="捕捉"></button><button class="wide" aria-label="正交"></button><button class="wide" aria-label="极轴"></button><button aria-label="交点"></button><button aria-label="垂点"></button>
</footer>
</body>
</html>
```
FILE: styles.css
```css
* { box-sizing: border-box; }
body {
  margin: 0;
  height: 100vh;
  display: flex;
  flex-direction: column;
  overflow: hidden;
  background: #fafafa;
  color: #262626;
  font: 12px/18px "Noto Sans", "Noto Sans CJK SC", sans-serif;
}
h1, h2, h3, h4, ul { margin: 0; padding: 0; font-weight: normal; list-style: none; }
button, input, select { font: inherit; color: inherit; }
button { border: 0; padding: 0; background: none; white-space: nowrap; }
svg { fill: none; flex: none; }
.sprite { position: absolute; width: 0; height: 0; }

.caret {
  display: inline-block;
  flex: none;
  border: 3px solid transparent;
  border-top-color: #777;
  border-bottom-width: 0;
}
.caret.large { border-width: 4px 4px 0; margin-left: 7px; vertical-align: middle; }

/* ribbon */
.ribbon {
  height: 65px;
  flex: none;
  display: flex;
  overflow: hidden;
  background: #fff;
  border-bottom: 1px solid #d6d6d6;
}
.group {
  flex: none;
  display: flex;
  flex-direction: column;
  justify-content: flex-end;
  height: 61px;
  border-right: 1px solid #d9d9d9;
}
.group h2 { font-size: 12px; text-align: center; line-height: 22px; }
.g-select { width: 233px; }
.g-sheet { width: 203px; }
.g-common { width: 276px; }
.g-modify { width: 237px; }
.g-draw { width: 70px; }
.g-select h2, .g-draw h2 { padding-top: 1px; line-height: 21px; }
.tools { display: grid; align-items: end; height: 48px; align-content: end; }
.g-select .tools { grid-template-columns: 46px 102px 80px; padding-left: 8px; }
.g-sheet .tools { grid-template-columns: 80px 110px; padding-left: 10px; }
.g-common .tools { grid-template-columns: 66px 110px 85px; padding-left: 11px; }
.g-modify .tools { grid-template-columns: 54px 54px 63px 50px; padding-left: 10px; }
.g-draw .tools { grid-template-columns: 32px 30px; padding-left: 8px; }
.col { display: flex; flex-direction: column; align-items: flex-start; height: 48px; }
.tool { display: flex; align-items: center; gap: 3px; height: 24px; }
.tool svg { width: 16px; height: 16px; }
.tool:disabled { color: #b0b0b0; }
.tool:disabled .caret { border-top-color: #bbb; }
.big { width: 40px; height: 52px; padding-top: 6px; border-radius: 4px; background: #c2d8f0; }

/* filters */
.filters { flex: none; height: 31px; display: flex; background: #f1f1f1; }
.filters label { position: relative; width: 100px; border-right: 1px solid #d6d6d6; }
.filters select {
  appearance: none;
  width: 100%;
  height: 31px;
  padding: 0 13px 0 3px;
  border: 0;
  background: none;
}
.filters label::after {
  content: "";
  position: absolute;
  right: 5px;
  top: 14px;
  border: 3px solid transparent;
  border-top-color: #555;
  border-bottom-width: 0;
}

/* workspace */
.workspace { flex: 1; min-height: 0; display: flex; gap: 4px; background: #fff; }
.panel { background: #fff; border: 1px solid #d6d6d6; display: flex; flex-direction: column; overflow: hidden; }
.panel-head { flex: none; height: 28px; display: flex; align-items: center; background: #ededf0; }
.grip { width: 8px; height: 16px; margin: 0 15px 0 5px; }
.panel-head h3 { font-size: 12px; margin-left: -3px; }
.close { margin-left: auto; width: 28px; height: 28px; display: grid; place-items: center; }
.close svg { width: 10px; height: 10px; }
.tab { height: 28px; width: 68px; padding-top: 2px; }
.tab.on { background: #fff; color: #1477ee; }
.side .grip { margin-right: 10px; }

.nav { flex: none; width: 133px; }
.nav-body { flex: 1; min-height: 0; display: flex; }
.nav-list { width: 119px; background: #f5f7f9; overflow: hidden; }
.nav-item { position: relative; width: 100%; height: 42px; padding: 1px 0 0 11px; display: flex; align-items: center; gap: 14px; }
.nav-item svg { width: 24px; height: 24px; }
.nav-item.blue { color: #3c7ae0; }
.nav-item.current { background: #e9eaef; }
.nav-item.badge::after { content: ""; position: absolute; left: 35px; top: 5px; width: 6px; height: 6px; border-radius: 50%; background: #f00; }
.sub-list { background: #fff; }
.sub-list button { display: block; height: 28px; padding: 2px 0 0 21px; }
.sub-list .active { color: #0d7ff2; }
.nav-scroll { width: 4px; margin: 108px 0 12px 4px; border-radius: 2px; background: #e9e9e9; }

.side { flex: none; width: 333px; display: flex; flex-direction: column; gap: 4px; }
.components { flex: none; height: 379px; }
.actions { flex: none; display: flex; gap: 9px; padding: 7px 10px; }
.actions button { width: 32px; height: 26px; display: grid; place-items: center; border-radius: 3px; background: #f4f4f4; }
.actions svg { width: 16px; height: 16px; }
.pair { display: flex; gap: 1px; }
.actions .drop { width: 12px; }
.actions .more { width: 26px; margin-left: auto; border: 1px solid #d9d9d9; display: flex; align-items: center; justify-content: center; gap: 1px; }
.more i { border: 3px solid transparent; border-left-color: #474f63; border-right-width: 0; }
.search { flex: none; height: 26px; margin: 0 9px 0 8px; padding: 0 9px 0 11px; border-radius: 13px; background: #f3f3f3; display: flex; align-items: center; }
.search input { flex: 1; min-width: 0; border: 0; background: none; padding: 0; outline: 0; }
.search input::placeholder { color: #7a7a7a; opacity: 1; }
.search svg { width: 16px; height: 16px; }
.tree-wrap { position: relative; flex: 1; min-height: 0; margin-top: 10px; overflow: hidden; }
.tree li { display: flex; align-items: center; height: 24px; padding-left: 24px; }
.tree .parent { padding-left: 6px; }
.tree span { padding-left: 3px; line-height: 21px; }
.tree .parent .caret { border-top-color: #888; }
.tree .selected { width: 234px; margin-right: 3px; border-radius: 3px; background: #c2d9f1; }
.tree svg { width: 16px; height: 16px; margin-right: 7px; }
.tree-scroll { position: absolute; right: 8px; top: 191px; width: 4px; height: 46px; border-radius: 2px; background: #e6e6e6; }

.props { flex: 1; }

/* property grid */
.grid { width: 100%; border-collapse: separate; border-spacing: 0; table-layout: fixed; margin-top: 1px; }
.props .grid { margin-top: 2px; }
.c-name { width: 101px; }
.c-add { width: 41px; }
.grid th { height: 24px; padding: 0; font-weight: normal; background: #ececec; border-right: 1px solid #d3d3d3; border-bottom: 1px solid #d3d3d3; }
.grid td { height: 25px; padding: 0 0 0 15px; white-space: nowrap; }
.grid td:nth-child(2) { padding: 0 1px 0 0; }
.grid td:nth-child(3) { padding: 0; text-align: center; }
.grid .key { color: #1557f5; }
.grid .section td { padding-left: 21px; border-bottom: 1px solid #fff; background: #ececec; }
.section td::before { content: ""; display: inline-block; width: 0; margin: 0 9px 2px -12px; vertical-align: middle; border: 3px solid transparent; border-left-color: #808080; border-right-width: 0; }
.section.open td::before { margin-right: 6px; border: 3px solid transparent; border-top-color: #808080; border-bottom-width: 0; }
.grid input[type=text] { display: block; width: 100%; height: 21px; padding: 0 2px; border: 1px solid #dcdcdc; background: #fff; }
.grid .muted { color: #8c8c8c; }
.grid input[type=radio] { appearance: none; display: block; width: 8px; height: 8px; margin: 0 auto; border: 1px solid #b5b5b5; border-radius: 50%; background: #dcdcde; }

/* drawing stage and dialog */
.stage {
  position: relative;
  flex: 1;
  min-width: 0;
  background: linear-gradient(#3b3b3b 0 116px, #1a821a 116px 138px, #28d428 138px 247px, #ffffce 247px 288px, #9c9c7e 288px 314px, #ffffce 314px 349px, #000 349px 723px, #9c9c7e 723px 762px, #ffffce 762px);
}
.model { position: absolute; inset: 0; width: 100%; height: 100%; }
.axis { font-size: 18px; fill: #fff; }
.handle { position: absolute; left: 0; top: 380px; width: 16px; height: 60px; border-radius: 0 6px 6px 0; background: #555; display: grid; place-items: center; }
.handle svg { width: 8px; height: 12px; }
.dialog {
  position: absolute;
  inset: 20px 0 0 20px;
  display: flex;
  flex-direction: column;
  padding: 0 0 55px 14px;
  background:
    radial-gradient(60px 50px at 116px 10px, #d6e8d6 30%, rgba(224, 224, 224, 0)),
    linear-gradient(#e0e0e0 0 80px, #dcefdc 125px, #dcf5dc 205px, #fbfff2 240px, #fafaf0 310px, #d8d8d8 345px 690px, #eeeee8 720px, #f1f1ea 742px, #fefef7 775px);
  box-shadow: 0 0 14px rgba(0, 0, 0, .4);
}
.title { flex: none; height: 31px; display: flex; align-items: center; padding-left: 11px; }
.title h1 { font-size: 13px; margin-right: 13px; }
.title svg { display: block; width: 16px; height: 16px; }
.undo { color: #2a7de1; margin-right: 14px; }
.redo { color: #a0a0a0; }
.dialog-body { flex: 1; min-height: 0; display: flex; gap: 8px; }
.lists { flex: none; width: 267px; display: flex; flex-direction: column; gap: 3px; }
.box { position: relative; flex: 1 1 0; min-height: 0; background: #fff; border: 1px solid #dcdcdc; }
.box h4 { margin: -1px -1px 0; height: 23px; padding-left: 7px; line-height: 21px; font-size: 12px; color: #7b7b7b; background: #eee; border: 1px solid #c6c6c6; }
.highlight { position: absolute; left: -3px; right: -2px; top: 89px; height: 38px; border: 3px solid #fb2b1c; border-radius: 3px; pointer-events: none; }

.editor { flex: 1; min-width: 0; display: flex; flex-direction: column; border-left: 2px solid #c4c8cc; border-bottom: 1px solid #c4c8cc; }
.tabs { flex: none; height: 27px; display: flex; align-items: flex-end; gap: 4px; border-bottom: 2px solid #c4c8cc; background: #e0e0e0; }
.tabs button { height: 22px; width: 92px; padding-left: 4px; display: flex; align-items: center; gap: 11px; background: #dcdcdc; }
.tabs svg { width: 16px; height: 16px; }
.tabs .on { height: 26px; margin: 0 0 -2px -1px; padding-left: 5px; gap: 9px; border: 1px solid #c4c8cc; border-bottom: 0; border-radius: 4px 4px 0 0; background: #fff; color: #1477ee; }
.bar { flex: none; height: 29px; display: flex; align-items: center; gap: 12px; padding: 0 6px; background: #fff; }
.bar .tool { gap: 3px; }
.cad { flex: 1; min-height: 0; width: 100%; background: #000; }
.note, .dim { font-family: "Liberation Sans Narrow", Roboto, sans-serif; font-size: 12px; fill: #969696; }
.dim { font-size: 11px; text-anchor: middle; }
.lime { fill: #b5dc70; }
.tiny { font-size: 6px; fill: #bbb; }
.status { flex: none; height: 27px; padding-left: 3px; line-height: 28px; background: #333; color: #fff; }

.foot { flex: none; height: 7px; display: flex; gap: 3px; padding: 3px 0 0 452px; overflow: hidden; background: linear-gradient(90deg, #fafafa 480px, #e0e0e0 520px); }
.foot button { flex: none; width: 25px; height: 16px; border: 1px solid #999; border-radius: 3px; background: #f4f4f4; }
.foot .wide { width: 36px; }
.foot .on { border-color: #2a7de1; background: #c2d5ee; }
.foot .mid { margin: 0 3px; }
```
